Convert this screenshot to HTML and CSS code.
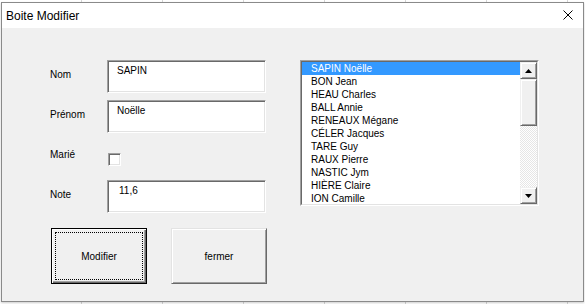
FILE: index.html
```html
<!DOCTYPE html>
<html lang="fr">
<head>
    <meta charset="UTF-8">
    <meta name="viewport" content="width=device-width, initial-scale=1.0">
    <title>Boite Modifier</title>
    <link rel="stylesheet" href="styles.css">
</head>
<body>
    <div class="window">
        <div class="titlebar">
            <span class="title">Boite Modifier</span>
            <span class="close">
                <svg width="10" height="10" viewBox="0 0 10 10">
                    <path d="M0.5 0.5 L9.5 9.5 M9.5 0.5 L0.5 9.5" stroke="#000" stroke-width="1" fill="none"/>
                </svg>
            </span>
        </div>
        <div class="client">
            <div class="form">
                <div class="field">
                    <label>Nom</label>
                    <div class="textbox">SAPIN</div>
                </div>
                <div class="field">
                    <label>Prénom</label>
                    <div class="textbox">Noëlle</div>
                </div>
                <div class="field">
                    <label>Marié</label>
                    <span class="check"></span>
                </div>
                <div class="field">
                    <label>Note</label>
                    <div class="textbox note">11,6</div>
                </div>
                <div class="actions">
                    <button class="btn default"><span class="focus">Modifier</span></button>
                    <button class="btn">fermer</button>
                </div>
            </div>

            <div class="listbox">
                <div class="listbox-inner">
                    <ul class="items">
                        <li class="selected">SAPIN Noëlle</li>
                        <li>BON Jean</li>
                        <li>HEAU Charles</li>
                        <li>BALL Annie</li>
                        <li>RENEAUX Mégane</li>
                        <li>CÉLER Jacques</li>
                        <li>TARE Guy</li>
                        <li>RAUX Pierre</li>
                        <li>NASTIC Jym</li>
                        <li>HIÈRE Claire</li>
                        <li>ION Camille</li>
                    </ul>
                    <div class="scrollbar">
                        <span class="sb-btn">
                            <svg width="7" height="4" viewBox="0 0 7 4"><polygon points="3.5,0 7,4 0,4" fill="#000"/></svg>
                        </span>
                        <span class="sb-thumb"></span>
                        <span class="sb-track"></span>
                        <span class="sb-btn">
                            <svg width="7" height="4" viewBox="0 0 7 4"><polygon points="0,0 7,0 3.5,4" fill="#000"/></svg>
                        </span>
                    </div>
                </div>
            </div>
        </div>
    </div>
</body>
</html>
```

FILE: styles.css
```css
body {
    margin: 0;
    width: 585px;
    height: 304px;
    overflow: hidden;
    font-family: "Liberation Sans", Arial, sans-serif;
    font-size: 10px;
    color: #000;
    background: #fff repeating-linear-gradient(90deg, transparent 0 80px, #d6d6d6 80px 81px);
    background-position: 1px 0;
}
.window {
    margin: 2px 0 0 1px;
    width: 583px;
    height: 300px;
    box-sizing: border-box;
    border: 1px solid #8a8a8a;
    display: flex;
    flex-direction: column;
    box-shadow: 0 1px 2px rgba(0, 0, 0, 0.2);
}
.titlebar {
    height: 25px;
    flex: none;
    background: #fff;
    display: flex;
    align-items: center;
    justify-content: space-between;
    padding: 0 10px 0 4px;
}
.title {
    font-size: 12px;
    line-height: 14px;
}
.close {
    display: flex;
    margin-bottom: 2px;
}
.client {
    flex: 1;
    background: #f0f0f0;
    display: flex;
    align-items: flex-start;
    padding: 32px 0 0 48px;
}
.form {
    display: flex;
    flex-direction: column;
    gap: 7px;
}
.field {
    display: flex;
    align-items: center;
    height: 33px;
}
.field label {
    width: 57px;
    line-height: 12px;
    margin-bottom: 3px;
}
.textbox {
    width: 159px;
    height: 33px;
    box-sizing: border-box;
    align-self: stretch;
    background: #fff;
    border: 1px solid;
    border-color: #a0a0a0 #fff #fff #a0a0a0;
    box-shadow: inset 1px 1px #696969, inset -1px -1px #e3e3e3;
    padding: 4px 9px;
    line-height: 12px;
}
.textbox.note {
    padding-left: 11px;
}
.check {
    width: 13px;
    height: 13px;
    box-sizing: border-box;
    margin: 6px 0 0 1px;
    background: #fff;
    border: 1px solid;
    border-color: #a0a0a0 #fff #fff #a0a0a0;
    box-shadow: inset 1px 1px #696969, inset -1px -1px #e3e3e3;
}
.actions {
    display: flex;
    gap: 24px;
    margin: 8px 0 0 1px;
}
.btn {
    width: 96px;
    height: 56px;
    box-sizing: border-box;
    font-family: inherit;
    font-size: 10px;
    color: #000;
    background: #f0f0f0;
    border: 1px solid;
    border-color: #e3e3e3 #696969 #696969 #e3e3e3;
    box-shadow: inset 1px 1px #fff, inset -1px -1px #a0a0a0;
    padding: 0;
}
.btn.default {
    border: 1px solid #000;
    box-shadow: inset 1px 1px #fff, inset -1px -1px #696969, inset -2px -2px #a0a0a0;
    display: flex;
    padding: 3px 3px 3px 3px;
}
.focus {
    flex: 1;
    display: flex;
    align-items: center;
    justify-content: center;
    border: 1px dotted #000;
}
.listbox {
    margin-left: 33px;
    width: 239px;
    height: 146px;
    box-sizing: border-box;
    border: 1px solid;
    border-color: #a0a0a0 #fff #fff #a0a0a0;
}
.listbox-inner {
    height: 100%;
    box-sizing: border-box;
    border: 1px solid;
    border-color: #696969 #e3e3e3 #e3e3e3 #696969;
    background: #fff;
    display: flex;
    overflow: hidden;
}
.items {
    flex: 1;
    list-style: none;
    margin: 0;
    padding: 0;
    overflow: hidden;
}
.items li {
    height: 13px;
    line-height: 13px;
    padding-left: 9px;
    white-space: nowrap;
}
.items li.selected {
    background: #3399ff;
    color: #fff;
}
.scrollbar {
    width: 17px;
    flex: none;
    display: flex;
    flex-direction: column;
}
.sb-btn, .sb-thumb {
    box-sizing: border-box;
    background: #f0f0f0;
    border: 1px solid;
    border-color: #f0f0f0 #696969 #696969 #f0f0f0;
    box-shadow: inset 1px 1px #fff, inset -1px -1px #a0a0a0;
}
.sb-btn {
    height: 17px;
    flex: none;
    display: flex;
    align-items: center;
    justify-content: center;
}
.sb-thumb {
    height: 47px;
    flex: none;
}
.sb-track {
    flex: 1;
    background: repeating-conic-gradient(#fff 0 25%, #e6e6e6 0 50%) 0 0 / 2px 2px;
}
```
